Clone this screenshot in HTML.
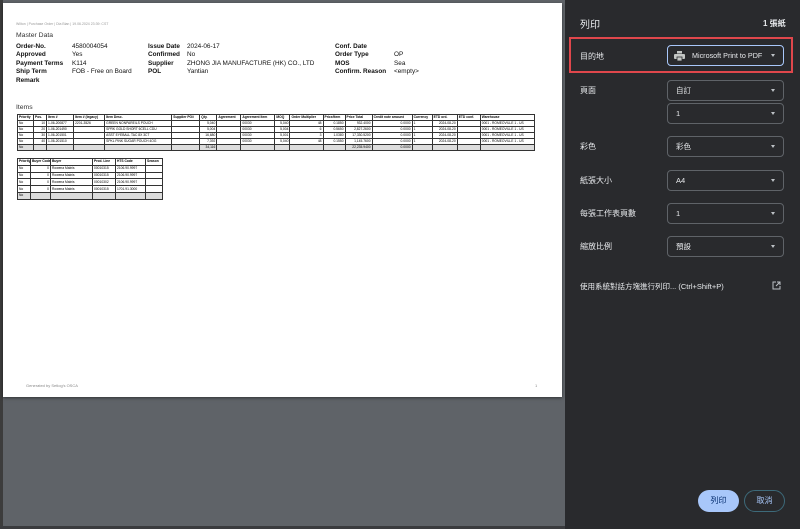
<!DOCTYPE html>
<html><head><meta charset="utf-8"><style>
*{margin:0;padding:0;box-sizing:border-box}
body{width:800px;height:529px;overflow:hidden;background:#5f6368;position:relative;font-family:"Liberation Sans","Noto Sans CJK TC",sans-serif}
.a{position:absolute;white-space:nowrap}
#page{position:absolute;left:3px;top:3px;width:559px;height:394px;background:#fff;box-shadow:0 1px 3px rgba(0,0,0,.5)}
.md{font-size:6.4px;color:#111}
.md b{font-weight:bold}
table{border-collapse:collapse;position:absolute;font-size:3.3px;table-layout:fixed}
td{border:0.6px solid #333;height:6px;padding:0 1px;overflow:hidden;white-space:nowrap;line-height:5px}
.t2 td{height:6.8px}
tr.h td{font-weight:bold}
tr.g td{background:#ddd}
.r{text-align:right}
#panel{position:absolute;left:565px;top:0;width:235px;height:529px;background:#292a2d;color:#e8eaed;font-size:8px}
.lab{position:absolute;left:15px;font-size:8px;color:#e8eaed}
.sel{position:absolute;left:102px;width:117px;height:21px;border:1px solid #5f6368;border-radius:4px;font-size:7.5px;padding-left:8px;line-height:19px;color:#e8eaed}
.sel:after{content:"";position:absolute;right:8px;top:8px;border-left:2.5px solid transparent;border-right:2.5px solid transparent;border-top:3px solid #bdc1c6}
</style></head><body>
<div class="a" style="left:0;top:0;width:3px;height:529px;background:#3c3c3c"></div>
<div class="a" style="left:0;top:526px;width:565px;height:3px;background:#3a3b3e"></div>
<div id="page">
<div class="a" style="left:13px;top:19px;font-size:3.5px;color:#999">Wilton | Purchase Order | Dia Bian | 19.06.2024 23:39: CST</div>
<div class="a md" style="left:13px;top:29px;font-size:6.8px;color:#333">Master Data</div>
<div class="a md" style="left:13px;top:40px;line-height:8.4px"><b>Order-No.</b><br><b>Approved</b><br><b>Payment Terms</b><br><b>Ship Term</b><br><b>Remark</b></div>
<div class="a md" style="left:69px;top:40px;line-height:8.4px">4580004054<br>Yes<br>K114<br>FOB - Free on Board</div>
<div class="a md" style="left:145px;top:40px;line-height:8.4px"><b>Issue Date</b><br><b>Confirmed</b><br><b>Supplier</b><br><b>POL</b></div>
<div class="a md" style="left:184px;top:40px;line-height:8.4px">2024-06-17<br>No<br>ZHONG JIA MANUFACTURE (HK) CO., LTD<br>Yantian</div>
<div class="a md" style="left:332px;top:40px;line-height:8.4px"><b>Conf. Date</b><br><b>Order Type</b><br><b>MOS</b><br><b>Confirm. Reason</b></div>
<div class="a md" style="left:391px;top:40px;line-height:8.4px">&nbsp;<br>OP<br>Sea<br>&lt;empty&gt;</div>
<div class="a md" style="left:13px;top:101px;font-size:6.8px;color:#333">Items</div>
<table style="left:14px;top:111px;width:518px">
<colgroup><col style="width:16px"><col style="width:13px"><col style="width:27px"><col style="width:31px"><col style="width:67px"><col style="width:28px"><col style="width:17px"><col style="width:24px"><col style="width:34px"><col style="width:15px"><col style="width:33px"><col style="width:22px"><col style="width:27px"><col style="width:40px"><col style="width:20px"><col style="width:25px"><col style="width:23px"><col style="width:54px"></colgroup>
<tr class="h"><td>Priority</td><td>Pos.</td><td>Item #</td><td>Item # (legacy)</td><td>Item Desc.</td><td>Supplier PO#</td><td>Qty.</td><td>Agreement</td><td>Agreement Item</td><td>MOQ</td><td>Order Multiplier</td><td>Price/Item</td><td>Price Total</td><td>Credit note amount</td><td>Currency</td><td>ETD ord.</td><td>ETD conf.</td><td>Warehouse</td></tr>
<tr><td>No</td><td class="r">10</td><td>1-06-200877</td><td>2201-3526</td><td>GREEN NONPAREILS POUCH</td><td></td><td class="r">5,040</td><td></td><td>00030</td><td class="r">5,040</td><td class="r">48</td><td class="r">0.1850</td><td class="r">932.4000</td><td class="r">0.0000</td><td>1</td><td class="r">2024-08-20</td><td></td><td>0001 - ROMEOVILLE 1 - US</td></tr>
<tr><td>No</td><td class="r">20</td><td>1-06-201490</td><td></td><td>SPRK GOLD SHORT 6CELL CDU</td><td></td><td class="r">5,004</td><td></td><td>00030</td><td class="r">5,004</td><td class="r">6</td><td class="r">0.5650</td><td class="r">2,827.2600</td><td class="r">0.0000</td><td>1</td><td class="r">2024-08-20</td><td></td><td>0001 - ROMEOVILLE 1 - US</td></tr>
<tr><td>No</td><td class="r">30</td><td>1-06-201501</td><td></td><td>ASST EYEBALL TAC 8X 3CT</td><td></td><td class="r">16,680</td><td></td><td>00030</td><td class="r">5,001</td><td class="r">3</td><td class="r">1.0380</td><td class="r">17,330.5200</td><td class="r">0.0000</td><td>1</td><td class="r">2024-08-20</td><td></td><td>0001 - ROMEOVILLE 1 - US</td></tr>
<tr><td>No</td><td class="r">40</td><td>1-06-201510</td><td></td><td>SPKL PINK SUGAR POUCH 4OG</td><td></td><td class="r">7,392</td><td></td><td>00030</td><td class="r">5,040</td><td class="r">48</td><td class="r">0.1550</td><td class="r">1,145.7600</td><td class="r">0.0000</td><td>1</td><td class="r">2024-08-20</td><td></td><td>0001 - ROMEOVILLE 1 - US</td></tr>
<tr class="g"><td>No</td><td></td><td></td><td></td><td></td><td></td><td class="r">34,116</td><td></td><td></td><td></td><td></td><td></td><td class="r">22,235.9400</td><td class="r">0.0000</td><td></td><td></td><td></td><td></td></tr>
</table>
<table class="t2" style="left:14px;top:155px;width:145px">
<colgroup><col style="width:13px"><col style="width:20px"><col style="width:42px"><col style="width:23px"><col style="width:30px"><col style="width:17px"></colgroup>
<tr class="h"><td>Priority</td><td>Buyer Code</td><td>Buyer</td><td>Prod. Line</td><td>HTS Code</td><td>Season</td></tr>
<tr><td>No</td><td class="r">0</td><td>Rowena Malnis</td><td>00010315</td><td>2106.90.9997</td><td></td></tr>
<tr><td>No</td><td class="r">0</td><td>Rowena Malnis</td><td>00010315</td><td>2106.90.9997</td><td></td></tr>
<tr><td>No</td><td class="r">0</td><td>Rowena Malnis</td><td>00010302</td><td>2106.90.9997</td><td></td></tr>
<tr><td>No</td><td class="r">0</td><td>Rowena Malnis</td><td>00010315</td><td>1701.91.3000</td><td></td></tr>
<tr class="g"><td>No</td><td></td><td></td><td></td><td></td><td></td></tr>
</table>
<div class="a" style="left:23px;top:380px;font-size:4px;color:#888">Generated by Setlog's OSCA</div>
<div class="a" style="left:532px;top:380px;font-size:4px;color:#888">1</div>
</div>
<div id="panel">
<div class="a" style="left:15px;top:16px;font-size:10px">列印</div>
<div class="a" style="left:198px;top:18px;font-size:8px;font-weight:bold">1 張紙</div>
<div class="a" style="left:4px;top:37px;width:224px;height:36px;border:2px solid #e0474c"></div>
<div class="lab" style="top:51px">目的地</div>
<div class="sel" style="top:45px;border:1.5px solid #a8c7fa;padding-left:24px;font-size:7.2px">Microsoft Print to PDF
<svg class="a" style="left:6px;top:5px" width="11" height="10" viewBox="0 0 11 10"><rect x="3" y="0" width="5" height="2.5" fill="#c4c7c5"/><rect x="0" y="3" width="11" height="5" rx="1" fill="#c4c7c5"/><rect x="3" y="6" width="5" height="4" fill="#c4c7c5" stroke="#292a2d" stroke-width="0.8"/></svg></div>
<div class="lab" style="top:85px">頁面</div>
<div class="sel" style="top:80px">自訂</div>
<div class="sel" style="top:103px">1<span></span></div>
<div class="lab" style="top:141px">彩色</div>
<div class="sel" style="top:136px">彩色</div>
<div class="lab" style="top:175px">紙張大小</div>
<div class="sel" style="top:170px">A4</div>
<div class="lab" style="top:208px">每張工作表頁數</div>
<div class="sel" style="top:203px">1</div>
<div class="lab" style="top:241px">縮放比例</div>
<div class="sel" style="top:236px">預設</div>
<div class="lab" style="top:281px;font-size:7.5px">使用系統對話方塊進行列印... (Ctrl+Shift+P)</div>
<svg class="a" style="left:207px;top:281px" width="9" height="9" viewBox="0 0 9 9" fill="none" stroke="#bdc1c6" stroke-width="1"><path d="M4 1H1v7h7V5M5 1h3v3M8 1L4 5"/></svg>
<div class="a" style="left:133px;top:490px;width:41px;height:22px;border-radius:11px;background:#a8c7fa;color:#062e6f;font-size:8px;text-align:center;line-height:22px">列印</div>
<div class="a" style="left:179px;top:490px;width:41px;height:22px;border-radius:11px;border:1px solid #3d6a7a;color:#a8c7fa;font-size:8px;text-align:center;line-height:20px">取消</div>
</div>
</body></html>
